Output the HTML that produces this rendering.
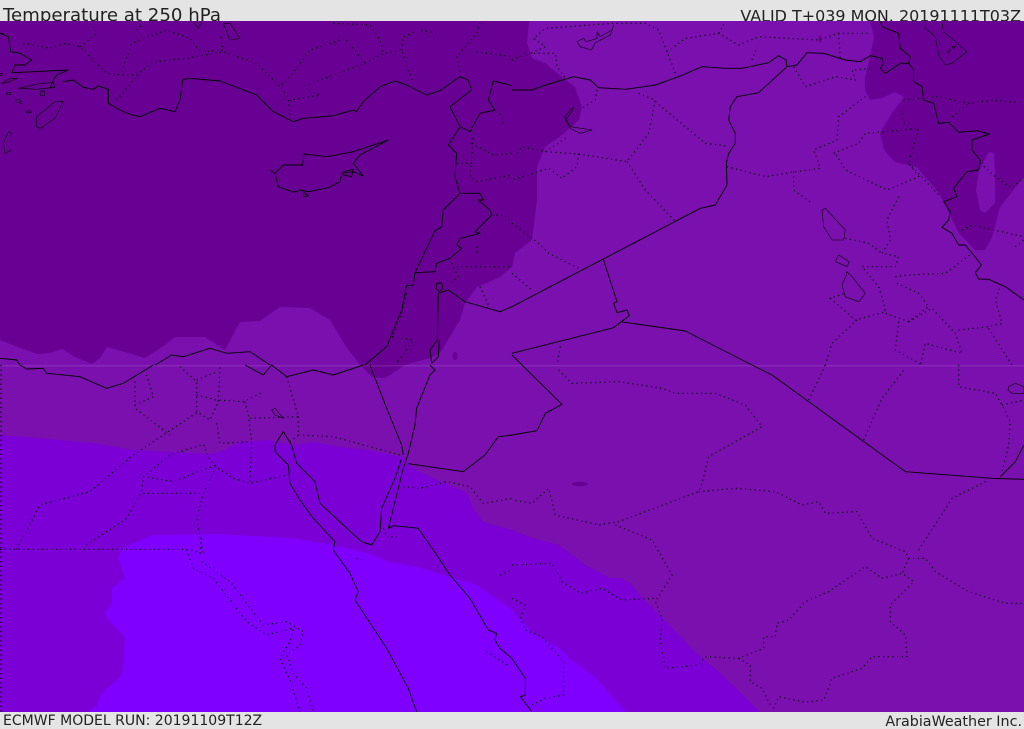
<!DOCTYPE html>
<html><head><meta charset="utf-8"><title>Temperature at 250 hPa</title>
<style>
html,body{margin:0;padding:0;background:#e4e4e4;width:1024px;height:729px;overflow:hidden}
svg{display:block;position:absolute;left:0;top:0}
text{font-family:"DejaVu Sans","Liberation Sans",sans-serif;fill:#222}
.s{fill:none;stroke:#000;stroke-width:2.8;stroke-linejoin:round}
.t{fill:none;stroke:#000;stroke-width:1.8;stroke-linejoin:round}
.d{fill:none;stroke:#000;stroke-width:3.6;stroke-dasharray:3.4 10.6}
</style></head><body>
<svg width="1024" height="729" viewBox="0 0 1024 729" xmlns="http://www.w3.org/2000/svg">
<rect width="1024" height="729" fill="#e4e4e4"/>
<text x="3" y="21" font-size="18.17">Temperature at 250 hPa</text>
<text x="1021" y="21.5" font-size="15.95" text-anchor="end">VALID T+039 MON. 20191111T03Z</text>
<text x="3" y="725" font-size="14.03">ECMWF MODEL RUN: 20191109T12Z</text>
<text x="1022" y="726" font-size="14.3" text-anchor="end">ArabiaWeather Inc.</text>
<rect y="21" width="1024" height="691" fill="#7a10ae"/>
<path fill="#690094" d="M0,21V340L20,348 38,354 50,353 62,349 75,357 92,364 100,358 107,347 125,352 145,358 165,345 175,337 205,337 225,350 240,322 260,321 280,307 310,308 330,320 345,345 360,365 372,377 385,378 405,365 430,358 440,353 460,320 465,303 477,287 500,277 512,267 515,253 532,240 537,200 537,167 545,147 562,135 579,120 582,107 575,87 562,77 545,63 532,58 527,43 529,21Z"/>
<path fill="#690094" fill-rule="evenodd" d="M870,21 874,37 870,57 865,77 865,90 870,100 882,98 895,92 904,97 892,113 880,133 884,150 895,162 917,167 925,177 939,193 949,213 959,233 975,250 985,250 992,237 1000,207 1024,177V21ZM989,152 979,170 976,190 980,210 985,213 995,203 995,173 994,153Z"/>
<path fill="#7a00d5" d="M0,435 93,443 133,450 207,454 220,452 240,442 267,440 293,445 313,442 347,448 373,451 403,457 413,468 433,478 467,493 473,508 483,522 512,530 532,538 559,545 585,565 599,572 609,578 622,578 632,585 642,598 662,617 695,652 719,672 760,712H0Z"/>
<path fill="#7f00ff" d="M88,712 97,705 100,695 122,675 125,638 107,618 105,612 112,603 112,588 125,578 118,558 123,548 152,535 217,534 290,538 333,545 367,553 390,562 417,567 450,577 477,585 512,610 532,632 559,648 569,658 595,677 625,712Z"/>
<rect y="365" width="1024" height="1.5" fill="#fff" opacity=".1"/>
<ellipse cx="455" cy="356" rx="2.5" ry="4" fill="#690094"/>
<ellipse cx="580" cy="484" rx="8" ry="2.3" fill="#690094"/>
<ellipse cx="820" cy="39" rx="1.5" ry="4" fill="#690094"/>

<!-- Q1 -->
<g transform="scale(.33333)">
<path class="d" d="M70,130 150,145 190,130 240,140 320,220 370,225 410,225 460,185 560,175 670,155 770,190 840,260 870,230 930,150 1035,115 1095,190 1000,225 930,250 920,270 960,285 870,300 840,260M240,140 290,100 275,70M350,300 410,230M365,215 395,130 500,90 570,115 600,155 670,150 660,100M410,90 430,70M1095,190 1150,160 1205,150 1240,250M1205,150 1210,110 1260,90 1310,100M1380,215 1370,170 1430,100 1440,70M1430,155 1500,165 1536,170M1000,70 1110,75 1140,120 1150,160M865,300 870,350M1420,400 1415,480 1410,530 1430,545 1536,525M1415,430 1480,465 1536,460M1370,490 1420,490M1475,645 1510,645 1536,665M1500,340 1510,370M1355,790 1375,830 1350,850M1370,800 1536,800M1430,740 1430,760M1440,860 1465,915M1220,880 1200,960 1175,1010 1240,1020 1190,1090"/>
<path class="s" d="M0,100 25,110 32,155 60,160 95,180 75,195 45,195 35,218 100,215 205,210 170,225 160,240 150,265M190,245 220,240 250,262 280,268 295,258 325,268 325,310 360,330 395,345 420,350 480,325 525,335 540,300 548,240 565,235 660,243 770,285 820,335 880,365 910,355 1000,347 1060,330 1070,335 1090,305 1140,260 1185,243 1220,255 1280,285 1320,272 1380,230 1405,240 1415,270 1350,320 1380,380 1410,395 1440,340 1485,330 1465,300 1480,243 1536,257"/>
<path class="s" d="M1380,380 1345,435 1370,460 1365,530 1380,580 1440,580 1450,600 1435,600 1470,630 1475,645 1425,695 1440,700 1380,715 1370,735 1385,745 1350,775 1310,790 1305,815 1245,818M1380,580 1330,630 1325,680 1305,692 1245,818 1240,855 1220,857 1205,930 1160,1040 1095,1095"/>
<path class="s" d="M1315,880 1345,870 1395,905 1500,935 1536,920M1315,880 1312,1020 1290,1050 1295,1090 1315,1070 1318,1020M1310,850 1325,848 1328,865 1318,875 1308,865Z"/>
<path class="s" d="M465,1095 515,1065 550,1070 630,1045 680,1060 750,1055 810,1095M0,1075 50,1080 60,1095"/>
<path class="s" d="M810,510 825,520 835,560 880,577 900,570 925,575 985,563 1020,545 1025,520 1060,515 1090,528 1060,490 1080,465 1165,420 1060,455 980,470 912,462 908,495 850,495 825,520M1030,515 1060,508 1055,530 1030,525ZM910,575 925,588 912,590Z"/>
<path class="t" d="M110,350 165,305 190,305 165,355 120,385 110,380ZM25,395 10,430 15,460 35,450 35,400ZM670,70 690,120 720,115 690,70ZM55,265 120,250 160,248 165,262 110,268ZM5,250 30,235 52,235 20,248ZM120,275 133,272 133,288 122,286ZM20,278 32,278 30,284 20,284ZM47,298 60,300 65,310 48,306ZM80,333 95,333 92,338 80,338ZM580,65 595,85 605,65"/>
<path class="t" d="M0,220 8,222 0,228M0,100 12,100"/>
</g>

<!-- Q2 -->
<g transform="translate(512,0) scale(.33333)">
<path class="d" d="M45,165 100,140 65,115 100,85 170,80 300,70 400,70 440,90 465,155 490,220M465,155 520,115 620,100 680,135 740,110 920,120 980,100 1070,100M720,180 735,140M980,100 985,180M0,180 45,160 130,160 135,200 160,235M620,100 640,65M255,270 250,300 210,325M380,280 430,300 410,400 345,485 200,462 100,455 30,440 10,470M430,305 580,430 650,438M345,485 400,570 490,665M200,462 195,500 150,535 110,505 0,540M100,455 160,415M0,670 80,730 110,760 200,805M0,820 60,870M645,500 760,530 850,515 925,505 905,450 975,420 980,350 1060,290M845,515 845,570 900,610M965,460 1040,430 1060,400 1220,385 1190,490 1220,530 1125,570 1000,510 970,460M1175,300 1280,290 1370,310 1440,300 1536,310M1320,350 1370,310M1170,340 1180,380M1190,490 1285,590M1160,590 1125,660 1135,720 1110,760 1160,770 1150,800 1050,800 1100,860 1115,910 1120,935 1030,960 955,895 1000,880M1000,715 1070,730 1110,760M1150,830 1190,825 1300,820 1380,760M1155,850 1220,880 1250,920 1190,965 1120,940M1190,965 1260,925 1330,1000 1350,1060 1240,1030 1225,1095M1340,990 1430,980 1470,970 1450,900 1465,860M1160,965 1150,1050 1230,1095M1035,960 960,1030 940,1095M1430,985 1500,1095M1350,690 1380,675 1536,710M1510,740 1536,720M1405,490 1450,530 1500,565 1536,530M145,1040 135,1095M845,200 880,260 970,230 1030,240 1020,210 1080,205"/>
<path class="s" d="M0,270 60,270 100,255 185,230 235,240 260,263 340,268 430,255 500,230 570,200 640,205 690,205 770,188 800,167 822,180 825,200 855,195 885,158 935,160 1000,180 1045,185 1075,167 1110,175 1115,190 1105,205 1120,220 1165,190 1190,190"/>
<path class="s" d="M1105,63 1110,80 1160,100 1165,145 1195,170 1190,190 1205,210 1205,245 1230,260 1235,300 1265,310 1280,370 1310,367 1340,397 1395,392 1432,402 1380,420 1380,450 1405,480 1400,510 1365,515 1340,545 1325,565 1335,590 1295,605 1315,635 1310,660 1290,682 1320,700 1340,735 1360,735 1385,765 1408,795 1390,818 1400,837 1430,838 1480,860 1536,900"/>
<path class="s" d="M825,200 740,278 675,290 655,320 650,360 670,400 670,430 650,460 643,490 645,555 610,615 565,625 0,920M273,775 315,905 305,910 315,938 345,930 352,947 305,983 0,1060M325,965 520,993 720,1095M0,1065 30,1095"/>
<path class="t" d="M195,125 215,115 222,125 240,120 255,115 255,95 265,110 300,90 305,75 295,105 250,128 238,150 205,140ZM185,320 158,350 175,380 240,390 205,400 175,385 160,360 180,335ZM930,630 940,625 1000,690 995,720 960,720 935,680ZM980,765 1012,785 1005,800 970,785ZM1005,815 1003,825 990,855 1000,890 1040,905 1060,880 1020,830Z"/>
<path class="t" d="M1290,70 1295,95 1365,155 1320,190 1300,195 1280,165 1270,110 1240,85 1240,63M1305,155 1315,150 1310,160ZM1320,140 1330,140 1325,146Z"/>
</g>

<!-- Q3 -->
<g transform="translate(0,365) scale(.33333)">
<path class="d" d="M3,0 3,1040M0,553 570,553 600,565 605,520M50,553 120,420 270,380 400,270 595,140M260,540 380,460 425,380 430,335 520,350 620,310 650,300 610,385 590,460 610,570M430,385 600,385M430,335 510,270 610,238 630,285 655,310 700,340 750,355 860,330M405,50 405,130 510,210M405,120 460,95 440,30M540,5 590,50 590,140 630,165 655,110 660,5M590,90 650,105 730,110 790,80M590,45 650,20M735,110 745,150 755,230 750,350M650,175 660,235 755,230M750,160 895,155 860,35M895,155 895,210 870,230M895,210 1000,215 1200,270M1210,365 1260,370 1340,350 1410,365 1450,415 1536,400M560,555 580,610 640,640 740,770 800,810 880,790 870,830 840,880 870,945 900,1040M605,590 690,650 790,780 860,770 910,800 900,840 860,870 880,925 920,970 940,1040M1150,490 1160,515 1190,515M1070,580 1085,585M1500,630 1536,615M1460,860 1530,905"/>
<path class="s" d="M60,0 80,12 130,10 140,25 240,35 320,70 370,55 460,0M735,0 790,30 815,0 860,35 940,15 1000,30 1090,0M1110,0 1160,130 1205,240 1210,270"/>
<path class="s" d="M1290,0 1305,15 1290,30 1250,130 1245,180 1225,265M1225,265 1210,310 1195,370 1165,490 1180,482 1255,490 1310,570 1350,630 1410,700 1465,795 1490,805 1485,825 1500,850 1536,880M1205,280 1185,340 1145,430 1140,500 1115,540 1085,530 1030,480 960,415 945,350 890,295 875,240 850,200 825,240 825,260 865,300 870,355 900,405 940,460 1005,530 1000,555 1050,625 1075,680 1065,705 1160,850 1225,970 1250,1040M1225,296 1390,320 1455,270 1495,215 1536,210"/>
<path class="t" d="M815,135 825,130 850,160 825,150Z"/>
</g>

<!-- Q4 -->
<g transform="translate(512,365) scale(.33333)">
<path class="d" d="M140,15 180,55 320,50 450,70 490,85 610,85 700,120 750,185 590,275 570,355 560,380 320,470 260,480 130,450 110,370 60,415 0,405M560,380 670,370 790,380 870,420 920,410 940,445 1035,440 1080,520 1180,560 1190,580 1240,580 1270,620 1370,680 1480,715 1536,715M1220,555 1320,400 1430,345M310,480 420,525 480,630 430,710 450,760 445,830 460,910 560,900 580,875 680,880 755,850 755,815 790,815 795,775 830,765 880,710 950,680 1060,605 1110,640 1170,625 1205,650 1135,720 1135,770 1180,810 1185,875 1080,875 1050,910 960,940 935,1005 880,1012 800,995 780,1040M680,880 715,900 715,950 750,970 775,1020M1190,580 1170,625M0,600 120,595 150,650 205,685 270,670 330,705 430,700M0,700 40,720 25,760 40,795 90,815 155,890 155,990 100,1000 60,1020M890,105 940,0M1055,225 1110,100 1180,10M1340,0 1340,65 1450,85 1470,120 1495,170 1490,240 1470,320M1470,120 1536,105"/>
<path class="s" d="M30,0 150,118 100,145 75,197 0,210M720,0 780,30 1180,320 1440,340 1536,343M1465,335 1510,290 1536,240M0,880 40,940 40,990 25,995 60,1040"/>
<path class="t" d="M1490,65 1510,55 1536,65V85L1500,85 1488,75Z"/>
</g>
</svg>
</body></html>
